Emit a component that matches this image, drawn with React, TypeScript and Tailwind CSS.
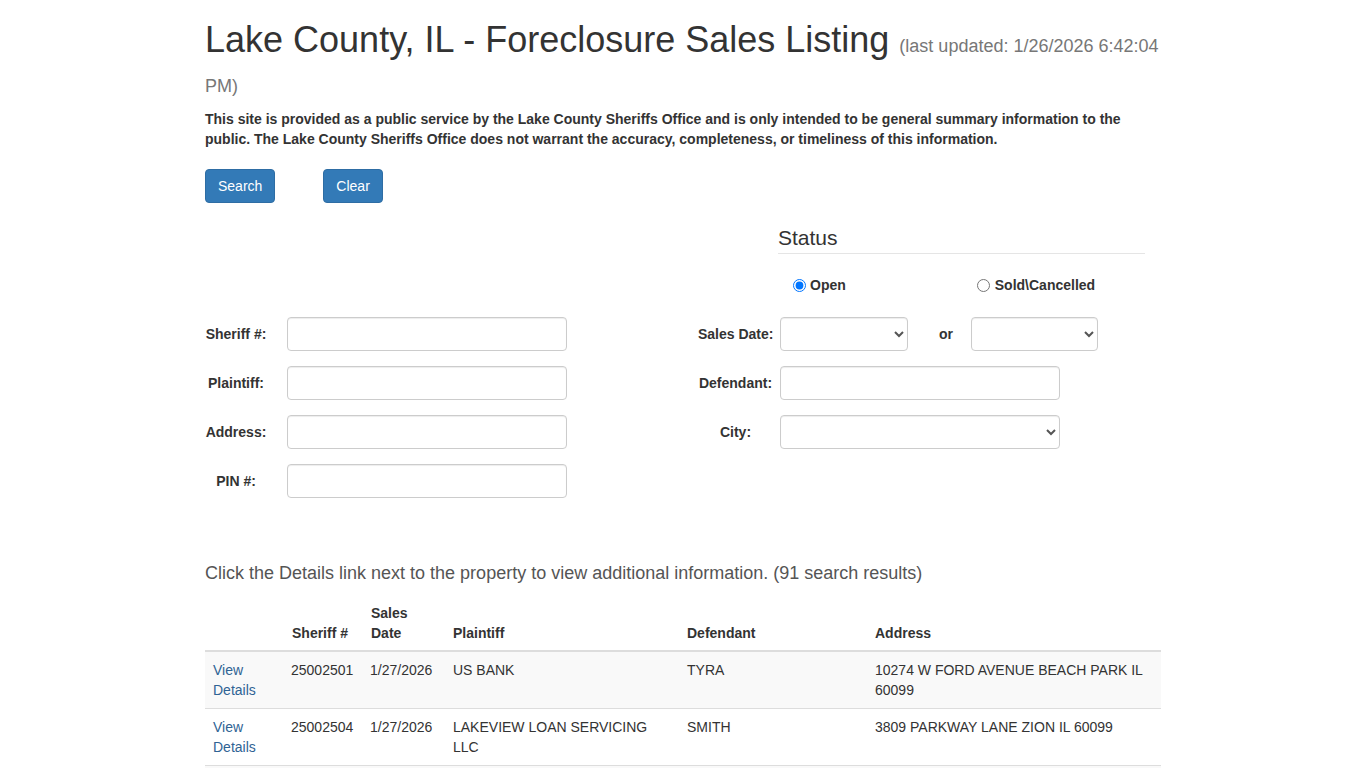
import React from 'react';

const rows = [
  {
    sheriff: '25002501',
    date: '1/27/2026',
    plaintiff: 'US BANK',
    defendant: 'TYRA',
    address: '10274 W FORD AVENUE BEACH PARK IL 60099',
  },
  {
    sheriff: '25002504',
    date: '1/27/2026',
    plaintiff: 'LAKEVIEW LOAN SERVICING LLC',
    defendant: 'SMITH',
    address: '3809 PARKWAY LANE ZION IL 60099',
  },
  {
    sheriff: '25002506',
    date: '1/27/2026',
    plaintiff: 'NATIONSTAR MORTGAGE LLC',
    defendant: 'JOHNSON',
    address: '512 N GENESEE STREET WAUKEGAN IL 60085',
  },
];

const inputCls =
  'h-[34px] rounded-[4px] border border-[#ccc] bg-white px-3 text-sm text-[#555] shadow-[inset_0_1px_1px_rgba(0,0,0,0.075)] outline-none';

const Label: React.FC<{ children: React.ReactNode; className?: string }> = ({ children, className }) => (
  <label className={'whitespace-nowrap text-sm font-bold text-[#333] text-center ' + (className || '')}>
    {children}
  </label>
);

function App() {
  return (
    <div className="min-h-screen bg-white font-['Liberation_Sans',Arial,sans-serif] text-sm leading-[20px] text-[#333]">
      <div className="mx-auto w-[956px]">
        <h1 className="mt-[20px] mb-[10px] text-[36px] leading-[39.6px] font-normal text-[#333]">
          Lake County, IL - Foreclosure Sales Listing{' '}
          <small className="text-[18px] leading-none text-[#777]">(last updated: 1/26/2026 6:42:04 PM)</small>
        </h1>

        <p className="mb-[20px] font-bold text-[#333]">
          This site is provided as a public service by the Lake County Sheriffs Office and is only intended to be
          general summary information to the public. The Lake County Sheriffs Office does not warrant the accuracy,
          completeness, or timeliness of this information.
        </p>

        <div className="flex gap-[48px]">
          <button className="h-[34px] rounded-[4px] border border-[#2e6da4] bg-[#337ab7] px-3 text-sm text-white">
            Search
          </button>
          <button className="h-[34px] rounded-[4px] border border-[#2e6da4] bg-[#337ab7] px-3 text-sm text-white">
            Clear
          </button>
        </div>

        {/* Status */}
        <div className="mt-[20px] ml-[573px] w-[367px]">
          <div className="h-[31px] border-b border-[#e5e5e5] text-[21px] leading-[30px] text-[#333]">Status</div>
          <div className="mt-[20px] flex h-[22px] items-center">
            <label className="ml-[15px] flex items-center font-bold">
              <input type="radio" name="status" defaultChecked className="m-0 h-[13px] w-[13px]" />
              <span className="ml-[4px]">Open</span>
            </label>
            <label className="ml-[131px] flex items-center font-bold">
              <input type="radio" name="status" className="m-0 h-[13px] w-[13px]" />
              <span className="ml-[5px]">Sold\Cancelled</span>
            </label>
          </div>
        </div>

        {/* Search form */}
        <div className="mt-[21px] flex flex-col gap-[15px]">
          <div className="flex items-center">
            <Label className="w-[62px]">Sheriff #:</Label>
            <input className={inputCls + ' ml-[20px] w-[280px]'} />
            <Label className="ml-[131px] w-[75px]">Sales Date:</Label>
            <select className={inputCls + ' ml-[7px] w-[128px] px-2'} />
            <span className="ml-[31px] font-bold">or</span>
            <select className={inputCls + ' ml-[18px] w-[127px] px-2'} />
          </div>
          <div className="flex items-center">
            <Label className="w-[62px]">Plaintiff:</Label>
            <input className={inputCls + ' ml-[20px] w-[280px]'} />
            <Label className="ml-[131px] w-[75px]">Defendant:</Label>
            <input className={inputCls + ' ml-[7px] w-[280px]'} />
          </div>
          <div className="flex items-center">
            <Label className="w-[62px]">Address:</Label>
            <input className={inputCls + ' ml-[20px] w-[280px]'} />
            <Label className="ml-[131px] w-[75px]">City:</Label>
            <select className={inputCls + ' ml-[7px] w-[280px] px-2'} />
          </div>
          <div className="flex items-center">
            <Label className="w-[62px]">PIN #:</Label>
            <input className={inputCls + ' ml-[20px] w-[280px]'} />
          </div>
        </div>

        <p className="mt-[62px] text-[18px] leading-[26px] text-[#555]">
          Click the Details link next to the property to view additional information. (91 search results)
        </p>

        <table className="mt-[9px] w-full table-fixed border-collapse text-left">
          <colgroup>
            <col className="w-[78px]" />
            <col className="w-[79px]" />
            <col className="w-[83px]" />
            <col className="w-[234px]" />
            <col className="w-[188px]" />
            <col className="w-[294px]" />
          </colgroup>
          <thead>
            <tr className="align-bottom">
              <th className="border-b-2 border-[#ddd] px-2 pt-2 pb-[7px]"></th>
              <th className="border-b-2 border-[#ddd] pt-2 pb-[7px] pr-2 pl-[9px] font-bold">Sheriff #</th>
              <th className="border-b-2 border-[#ddd] pt-2 pb-[7px] pr-2 pl-[9px] font-bold">Sales Date</th>
              <th className="border-b-2 border-[#ddd] px-2 pt-2 pb-[7px] font-bold">Plaintiff</th>
              <th className="border-b-2 border-[#ddd] px-2 pt-2 pb-[7px] font-bold">Defendant</th>
              <th className="border-b-2 border-[#ddd] px-2 pt-2 pb-[7px] font-bold">Address</th>
            </tr>
          </thead>
          <tbody>
            {rows.map((r, i) => (
              <tr key={r.sheriff} className={'align-top ' + (i % 2 === 0 ? 'bg-[#f9f9f9]' : 'bg-white')}>
                <td className="border-t border-[#ddd] p-2">
                  <a href="#" className="text-[#2f6394]">
                    View Details
                  </a>
                </td>
                <td className="border-t border-[#ddd] p-2">{r.sheriff}</td>
                <td className="border-t border-[#ddd] p-2">{r.date}</td>
                <td className="border-t border-[#ddd] p-2">{r.plaintiff}</td>
                <td className="border-t border-[#ddd] p-2">{r.defendant}</td>
                <td className="border-t border-[#ddd] p-2">{r.address}</td>
              </tr>
            ))}
          </tbody>
        </table>
      </div>
    </div>
  );
}

export default App;
